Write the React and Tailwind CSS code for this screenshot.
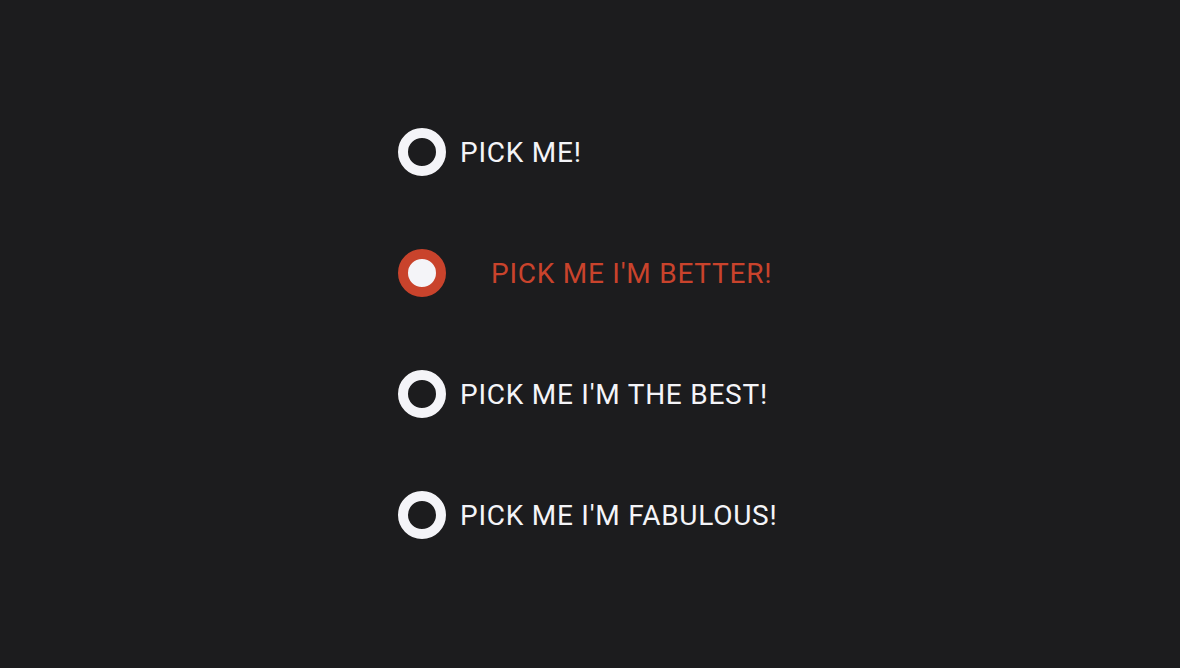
import { useState } from "react";

const options = [
  "PICK ME!",
  "PICK ME I'M BETTER!",
  "PICK ME I'M THE BEST!",
  "PICK ME I'M FABULOUS!",
];

export default function App() {
  const [picked, setPicked] = useState(1);

  return (
    <div
      className="h-[668px] w-full bg-[#1c1c1e] flex justify-center"
      style={{ fontFamily: "Roboto, 'Liberation Sans', sans-serif" }}
    >
      <div className="w-[384px] pt-[128px] flex flex-col gap-[73px]">
        {options.map((label, i) => {
          const on = i === picked;
          return (
            <label
              key={label}
              onClick={() => setPicked(i)}
              className="flex items-center h-[48px] cursor-pointer"
            >
              <span
                className={
                  "w-[48px] h-[48px] rounded-full border-[10px] shrink-0 " +
                  (on ? "border-[#c9432c] bg-[#f4f4f8]" : "border-[#f4f4f8] bg-[#1c1c1e]")
                }
              />
              <span
                className={
                  "text-[28px] tracking-[0.75px] leading-none pt-[2px] transition-all duration-300 " +
                  (on ? "ml-[45px] text-[#c9432c]" : "ml-[14px] text-[#f4f4f8]")
                }
              >
                {label}
              </span>
            </label>
          );
        })}
      </div>
    </div>
  );
}
